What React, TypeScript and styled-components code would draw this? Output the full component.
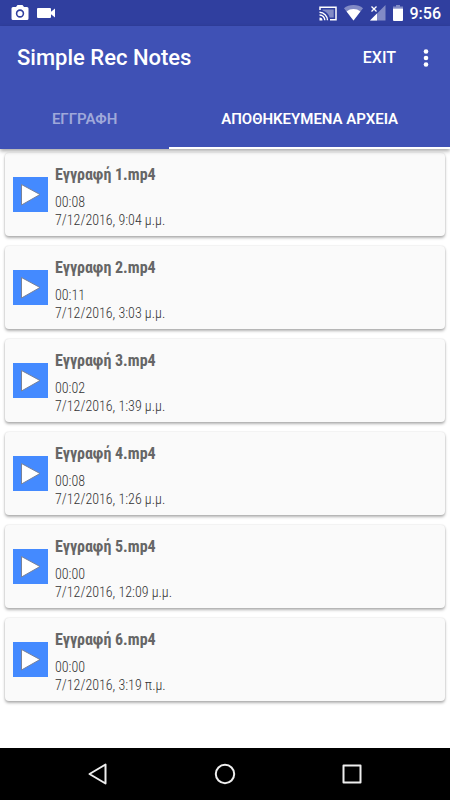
import React, { useState } from "react";
import styled, { createGlobalStyle } from "styled-components";

const GlobalStyle = createGlobalStyle`
  *, *::before, *::after { box-sizing: border-box; }
  body { margin: 0; background: #ffffff; font-family: Roboto, sans-serif; }
  button { font: inherit; color: inherit; border: 0; padding: 0; background: none; cursor: pointer; }
`;

const Screen = styled.div`
  display: flex;
  flex-direction: column;
  min-height: 100vh;
`;

const StatusBar = styled.div`
  display: flex;
  align-items: center;
  justify-content: space-between;
  height: 26px;
  padding: 0 9px 0 11px;
  background: #303f9f;
  color: #ffffff;
`;

const StatusGroup = styled.div<{ $gap: number }>`
  display: flex;
  align-items: center;
  gap: ${({ $gap }) => $gap}px;

  svg { display: block; }
`;

const Clock = styled.time`
  font-size: 16px;
  line-height: 20px;
  font-weight: 500;
  padding-top: 2px;
`;

const Header = styled.header`
  position: relative;
  background: #3f51b5;
  color: #ffffff;
  box-shadow: 0 2px 4px rgba(0, 0, 0, 0.35);
`;

const Toolbar = styled.div`
  display: flex;
  align-items: center;
  height: 64px;
  padding: 0 16px 0 17px;
`;

const AppTitle = styled.h1`
  flex: 1;
  margin: 0;
  font-size: 22px;
  line-height: 28px;
  font-weight: 500;
`;

const ExitButton = styled.button`
  && {
    font-size: 16px;
    line-height: 20px;
    font-weight: 500;
  }
`;

const MenuButton = styled.button`
  display: flex;
  justify-content: center;
  width: 16px;
  margin-left: 22px;
`;

const Tabs = styled.div`
  display: flex;
  height: 59px;
`;

const Tab = styled.button<{ $active: boolean }>`
  flex: 1 0 auto;
  && {
    padding: 0 50px;
    font-size: 15px;
    font-weight: 600;
    line-height: 20px;
    color: ${({ $active }) => ($active ? "#ffffff" : "#9fa8da")};
    border-bottom: 2px solid ${({ $active }) => ($active ? "#ffffff" : "transparent")};
  }
`;

const List = styled.ul`
  flex: 1;
  display: flex;
  flex-direction: column;
  gap: 10px;
  margin: 0;
  padding: 4px 5px 10px;
  list-style: none;
`;

const Card = styled.li`
  display: flex;
  align-items: center;
  gap: 7px;
  height: 83px;
  padding: 0 8px;
  border-radius: 4px;
  background: #fafafa;
  box-shadow: 0 2px 3px rgba(0, 0, 0, 0.3), 0 0 2px rgba(0, 0, 0, 0.14);
`;

const PlayButton = styled.button`
  width: 35px;
  height: 35px;
  && { background: #448aff; }

  svg { display: block; }
`;

const Details = styled.div`
  display: flex;
  flex-direction: column;
  padding-top: 2px;
  font-family: "Roboto Condensed", "Liberation Sans Narrow", Roboto, sans-serif;
  font-size: 14px;
  font-weight: 300;
  line-height: 18px;
  color: #333333;
`;

const FileName = styled.h2`
  margin: 0 0 6px;
  font-size: 16px;
  line-height: 24px;
  font-weight: 700;
  color: #666666;
`;

const NavBar = styled.nav`
  display: flex;
  justify-content: center;
  gap: 99px;
  height: 52px;
  background: #000000;
  color: #eeeeee;
`;

const NavButton = styled.button`
  display: grid;
  place-items: center;
  width: 28px;
`;

const recordings = [
  { name: "Εγγραφή 1.mp4", length: "00:08", date: "7/12/2016, 9:04 μ.μ." },
  { name: "Εγγραφη 2.mp4", length: "00:11", date: "7/12/2016, 3:03 μ.μ." },
  { name: "Εγγραφή 3.mp4", length: "00:02", date: "7/12/2016, 1:39 μ.μ." },
  { name: "Εγγραφή 4.mp4", length: "00:08", date: "7/12/2016, 1:26 μ.μ." },
  { name: "Εγγραφή 5.mp4", length: "00:00", date: "7/12/2016, 12:09 μ.μ." },
  { name: "Εγγραφή 6.mp4", length: "00:00", date: "7/12/2016, 3:19 π.μ." },
];

const tabNames = ["ΕΓΓΡΑΦΗ", "ΑΠΟΘΗΚΕΥΜΕΝΑ ΑΡΧΕΙΑ"];

const CameraIcon = () => (
  <svg width="18" height="16" viewBox="0 0 18 16" fill="currentColor">
    <path fillRule="evenodd" d="M6.500 0h5l1.500 2h3a1.500 1.500 0 0 1 1.500 1.500v10A1.500 1.500 0 0 1 16 15H2A1.500 1.500 0 0 1 .5 13.500v-10A1.500 1.500 0 0 1 2 2h3zM9 4.300a4.200 4.200 0 1 0 0 8.400a4.200 4.200 0 0 0 0-8.400z" />
    <circle cx="9" cy="8.500" r="2.600" />
  </svg>
);

const VideoIcon = () => (
  <svg width="18" height="10" viewBox="0 0 18 10" fill="currentColor">
    <path d="M1 0h12a1 1 0 0 1 1 1v2.800L18 .5v9l-4-3.300V9a1 1 0 0 1-1 1H1a1 1 0 0 1-1-1V1a1 1 0 0 1 1-1z" />
  </svg>
);

const CastIcon = () => (
  <svg width="18" height="15" viewBox="0 0 18 15" fill="none" stroke="currentColor">
    <path strokeWidth="1.500" d="M1 4V1.200h16v12.600h-6" />
    <path fill="currentColor" stroke="none" d="M3.500 3.500h11.200v8h-4A10.500 10.500 0 0 0 3.500 4.500z" opacity="0.4" />
    <path strokeWidth="1.400" d="M.5 6.300a8 8 0 0 1 8 8M.5 9a5.300 5.300 0 0 1 5.300 5.300" />
    <path fill="currentColor" stroke="none" d="M.5 11.500A3 3 0 0 1 3.500 14.500h-3z" />
  </svg>
);

const WifiIcon = () => (
  <svg width="19" height="16" viewBox="0 0 18 15" fill="currentColor">
    <path opacity="0.4" d="M9 0C5.500 0 2.400 1.100 0 3l9 11.500L18 3C15.600 1.100 12.500 0 9 0z" />
    <path d="M9 3.800c-2.500 0-4.700.8-6.500 2.300L9 14.500l6.500-8.400C13.700 4.600 11.500 3.800 9 3.800z" />
  </svg>
);

const SignalIcon = () => (
  <svg width="16" height="16" viewBox="0 0 16 16" fill="currentColor">
    <path opacity="0.4" d="M15.500 0v15.500H0z" />
    <path d="M7 8.500v7H0z" />
    <path d="M1.500 1.500l5 5M6.500 1.500l-5 5" stroke="currentColor" strokeWidth="1.300" />
  </svg>
);

const BatteryIcon = () => (
  <svg width="10" height="16" viewBox="0 0 10 16" fill="currentColor">
    <path opacity="0.4" d="M3 0h4v1.500h3V3.500H0V1.500h3z" />
    <path d="M0 3.500h10V15a1 1 0 0 1-1 1H1a1 1 0 0 1-1-1z" />
  </svg>
);

const MoreIcon = () => (
  <svg width="6" height="20" viewBox="0 0 6 20" fill="currentColor">
    <circle cx="3" cy="3.500" r="2.300" />
    <circle cx="3" cy="10" r="2.300" />
    <circle cx="3" cy="16.500" r="2.300" />
  </svg>
);

const PlayIcon = () => (
  <svg width="35" height="35" viewBox="0 0 35 35">
    <path d="M8.500 7.500L27 17.500L8.500 28z" fill="#ffffff" stroke="#78829a" strokeWidth="1" strokeLinejoin="round" />
  </svg>
);

const NavIcon = ({ children }: { children: React.ReactNode }) => (
  <svg width="24" height="24" viewBox="0 0 24 24" fill="none" stroke="currentColor" strokeWidth="2" strokeLinejoin="round">
    {children}
  </svg>
);

export default function App() {
  const [activeTab, setActiveTab] = useState(1);

  return (
    <Screen>
      <GlobalStyle />
      <StatusBar>
        <StatusGroup $gap={8}>
          <CameraIcon />
          <VideoIcon />
        </StatusGroup>
        <StatusGroup $gap={7}>
          <CastIcon />
          <WifiIcon />
          <SignalIcon />
          <BatteryIcon />
          <Clock>9:56</Clock>
        </StatusGroup>
      </StatusBar>
      <Header>
        <Toolbar>
          <AppTitle>Simple Rec Notes</AppTitle>
          <ExitButton type="button">EXIT</ExitButton>
          <MenuButton type="button" aria-label="More options">
            <MoreIcon />
          </MenuButton>
        </Toolbar>
        <Tabs role="tablist">
          {tabNames.map((name, index) => (
            <Tab
              key={name}
              type="button"
              role="tab"
              aria-selected={index === activeTab}
              $active={index === activeTab}
              onClick={() => setActiveTab(index)}
            >
              {name}
            </Tab>
          ))}
        </Tabs>
      </Header>
      <List>
        {recordings.map(({ name, length, date }) => (
          <Card key={name}>
            <PlayButton type="button" aria-label={`Play ${name}`}>
              <PlayIcon />
            </PlayButton>
            <Details>
              <FileName>{name}</FileName>
              <span>{length}</span>
              <span>{date}</span>
            </Details>
          </Card>
        ))}
      </List>
      <NavBar>
        <NavButton type="button" aria-label="Back">
          <NavIcon><path d="M19.500 2.500v19L3.500 12z" /></NavIcon>
        </NavButton>
        <NavButton type="button" aria-label="Home">
          <NavIcon><circle cx="12" cy="12" r="9.200" /></NavIcon>
        </NavButton>
        <NavButton type="button" aria-label="Recent apps">
          <NavIcon><rect x="3.500" y="3.500" width="17" height="17" /></NavIcon>
        </NavButton>
      </NavBar>
    </Screen>
  );
}
